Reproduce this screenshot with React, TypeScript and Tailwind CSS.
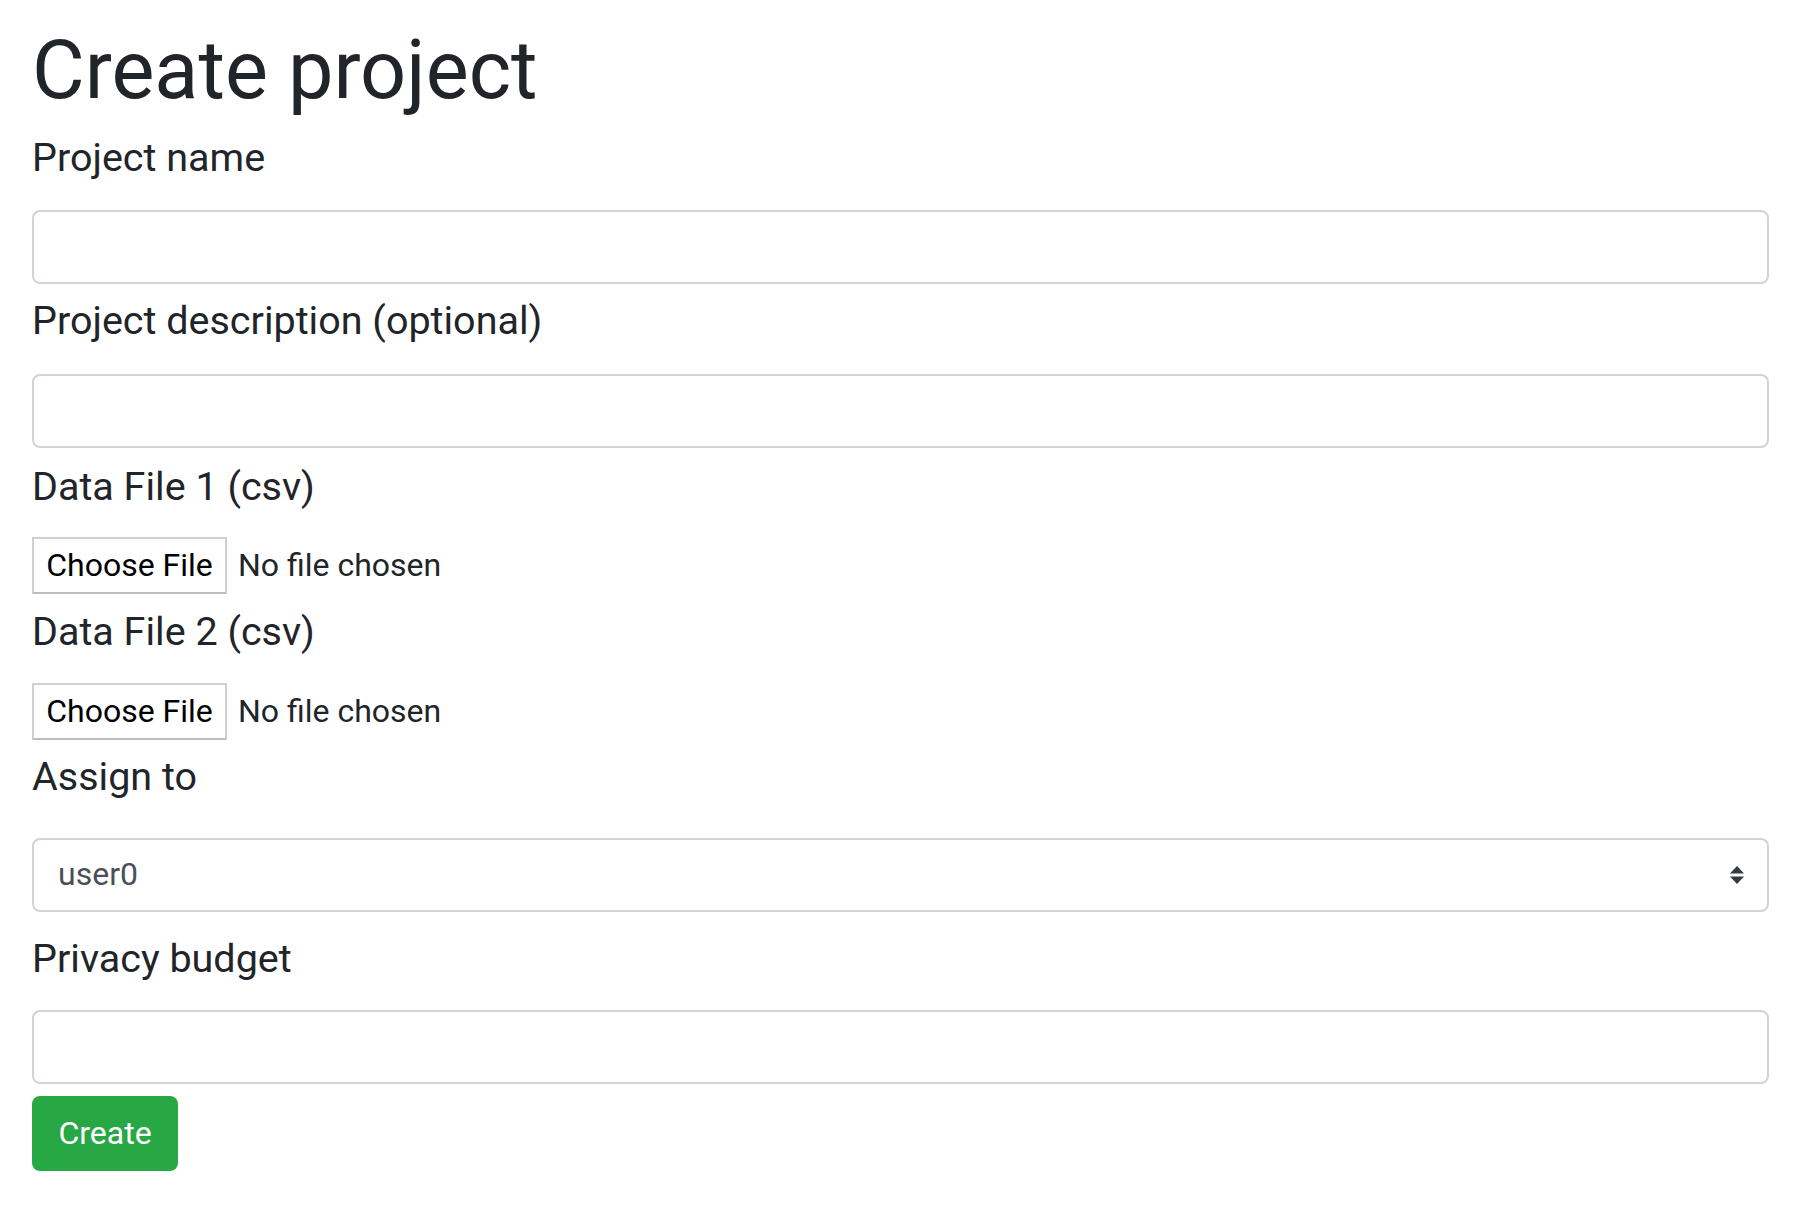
import React from "react"

const font = { fontFamily: "Roboto, 'Noto Sans', Arial, sans-serif" }

function Label({ text, className }: { text: string; className: string }) {
  return <label className={`block text-[39.5px] leading-[60px] text-[#212529] ${className}`}>{text}</label>
}

function TextInput() {
  return <div className="h-[74px] w-full rounded-[8px] border-2 border-[#ced4da] bg-white" />
}

function FileInput() {
  return (
    <div className="flex h-[57px] items-center">
      <div className="flex h-[57px] w-[195px] items-center justify-center border-2 border-[#d0d0d0] border-b-[#bdbdbd] bg-white pb-[2px] text-[32px] text-black">
        Choose File
      </div>
      <span className="ml-[11px] pb-[2px] text-[32px] text-[#212529]">No file chosen</span>
    </div>
  )
}

export default function App() {
  return (
    <div className="min-h-screen bg-white pl-[32px] pr-[43px]" style={font}>
      <h1 className="pt-[22px] text-[81px] font-normal leading-[98px] text-[#212529]">Create project</h1>

      <Label text="Project name" className="mt-[8px] mb-[22px]" />
      <TextInput />

      <Label text="Project description (optional)" className="mt-[7px] mb-[23px]" />
      <TextInput />

      <Label text="Data File 1 (csv)" className="mt-[9px] mb-[20px]" />
      <FileInput />

      <Label text="Data File 2 (csv)" className="mt-[8px] mb-[21px]" />
      <FileInput />

      <Label text="Assign to" className="mt-[7px] mb-[31px]" />
      <div className="relative flex h-[74px] w-full items-center rounded-[8px] border-2 border-[#ced4da] bg-white pb-[2px] pl-[24px] text-[32px] text-[#495057]">
        user0
        <svg className="absolute right-[23px] top-1/2 -translate-y-1/2" width="14" height="18" viewBox="0 0 14 18">
          <path d="M7 0 L14 7.5 L0 7.5 Z" fill="#343a40" />
          <path d="M0 10.5 L14 10.5 L7 18 Z" fill="#343a40" />
        </svg>
      </div>

      <Label text="Privacy budget" className="mt-[17px] mb-[21px]" />
      <TextInput />

      <button className="mt-[12px] flex h-[75px] w-[146px] items-center justify-center rounded-[8px] bg-[#28a745] pb-[2px] text-[32px] text-white">
        Create
      </button>
    </div>
  )
}
